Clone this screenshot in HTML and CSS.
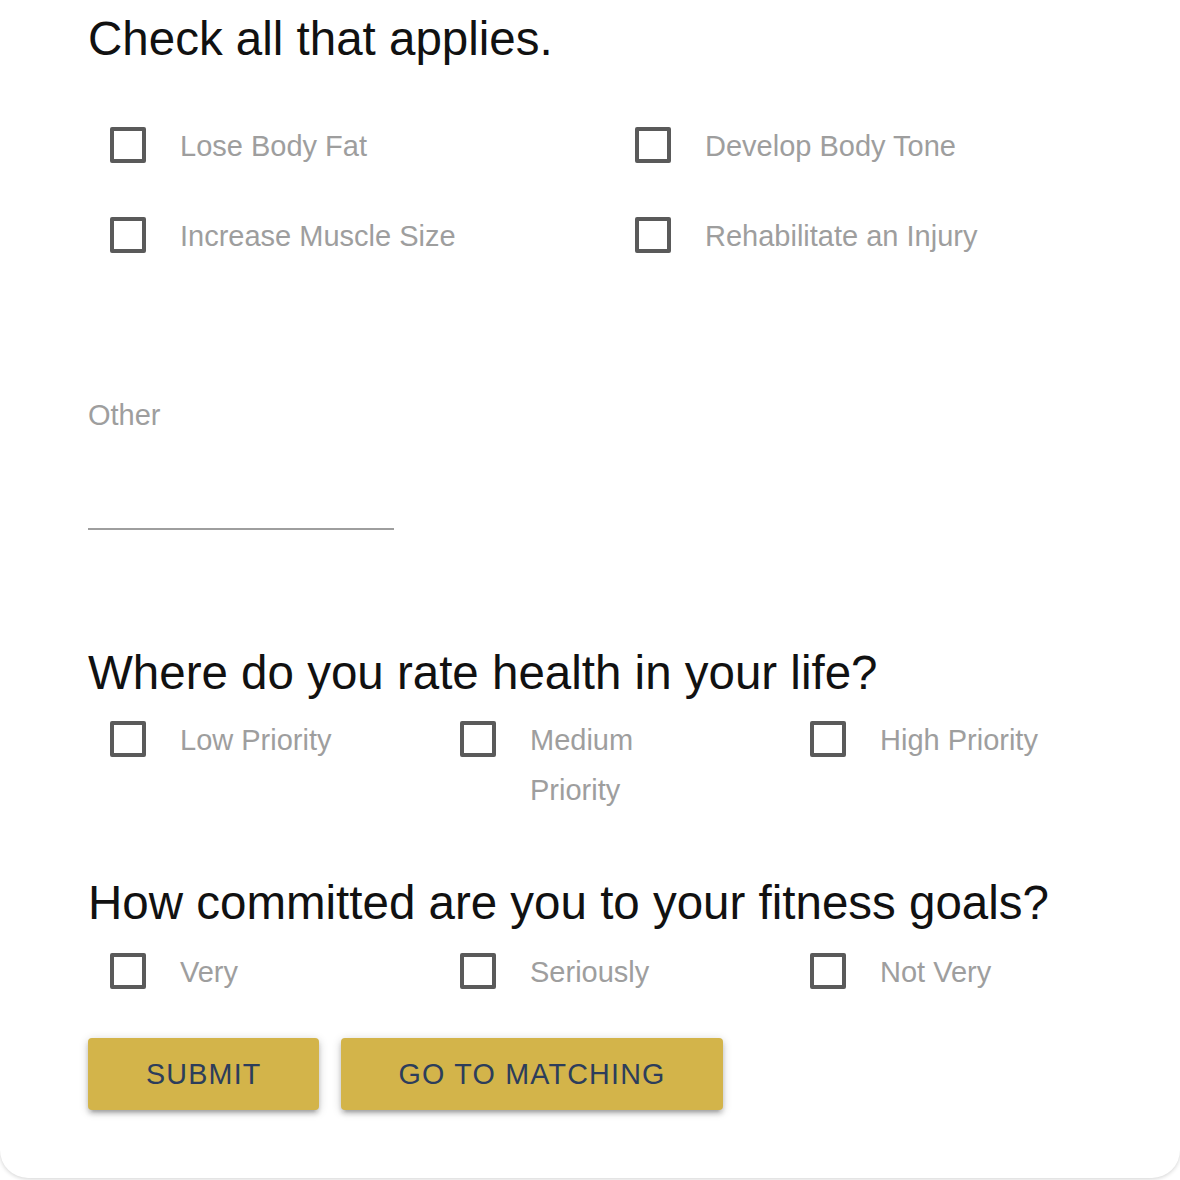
FILE: index.html
```html
<!DOCTYPE html>
<html lang="en">
<head>
<meta charset="utf-8">
<title>Fitness goals</title>
<link rel="stylesheet" href="styles.css">
</head>
<body>
<form class="card">
  <h2 class="question q-first">Check all that applies.</h2>
  <div class="grid two">
    <label class="option"><input type="checkbox"><span class="text">Lose Body Fat</span></label>
    <label class="option"><input type="checkbox"><span class="text">Develop Body Tone</span></label>
    <label class="option"><input type="checkbox"><span class="text">Increase Muscle Size</span></label>
    <label class="option"><input type="checkbox"><span class="text">Rehabilitate an Injury</span></label>
  </div>
  <div class="field">
    <label class="field-label" for="other">Other</label>
    <input class="field-input" id="other" type="text">
  </div>
  <h2 class="question q-second">Where do you rate health in your life?</h2>
  <div class="grid three">
    <label class="option"><input type="checkbox"><span class="text narrow">Low Priority</span></label>
    <label class="option"><input type="checkbox"><span class="text narrow">Medium Priority</span></label>
    <label class="option"><input type="checkbox"><span class="text narrow">High Priority</span></label>
  </div>
  <h2 class="question q-third">How committed are you to your fitness goals?</h2>
  <div class="grid three lower">
    <label class="option"><input type="checkbox"><span class="text narrow">Very</span></label>
    <label class="option"><input type="checkbox"><span class="text narrow">Seriously</span></label>
    <label class="option"><input type="checkbox"><span class="text narrow">Not Very</span></label>
  </div>
  <div class="actions">
    <button type="button" class="btn">SUBMIT</button>
    <button type="button" class="btn">GO TO MATCHING</button>
  </div>
</form>
</body>
</html>
```
FILE: styles.css
```css
html, body {
  margin: 0;
  padding: 0;
  background: #ffffff;
}

body {
  font-family: "Liberation Sans", Arial, Helvetica, sans-serif;
  width: 1180px;
  height: 1180px;
  overflow: hidden;
}

.card {
  box-sizing: border-box;
  width: 1180px;
  background: #ffffff;
  border-radius: 0 0 28px 28px;
  box-shadow: 0 1px 4px rgba(0, 0, 0, 0.18);
  padding: 10px 0 68px 88px;
  display: flex;
  flex-direction: column;
}

.question {
  margin: 0;
  font-size: 47.5px;
  line-height: 56px;
  font-weight: 400;
  color: #111111;
}

.q-first { margin-top: 1px; }
.q-second { margin-top: 115px; }
.q-third { margin-top: 60px; }

.grid {
  display: grid;
  width: 1050px;
  row-gap: 40px;
}

.grid.two {
  grid-template-columns: 525px 525px;
  margin-top: 54px;
}

.grid.three {
  grid-template-columns: 350px 350px 350px;
  margin-top: 14px;
}

.grid.three.lower {
  margin-top: 16px;
}

.option {
  display: flex;
  align-items: flex-start;
  padding-left: 22px;
  cursor: pointer;
}

.option input {
  appearance: none;
  -webkit-appearance: none;
  box-sizing: border-box;
  width: 36px;
  height: 36px;
  margin: 6px 0 0 0;
  border: 4px solid #5a5a5a;
  border-radius: 2px;
  background: transparent;
  flex: 0 0 36px;
}

.text {
  margin-left: 34px;
  font-size: 29px;
  line-height: 50px;
  color: #9e9e9e;
}

.text.narrow {
  max-width: 180px;
}

.field {
  display: flex;
  flex-direction: column;
  margin-top: 129px;
  width: 306px;
}

.field-label {
  font-size: 29px;
  line-height: 50px;
  color: #9e9e9e;
}

.field-input {
  box-sizing: border-box;
  height: 90px;
  width: 306px;
  border: none;
  border-bottom: 2px solid #9e9e9e;
  background: transparent;
  outline: none;
  padding: 0;
  font-family: inherit;
  font-size: 29px;
}

.actions {
  display: flex;
  gap: 22px;
  margin-top: 41px;
}

.btn {
  height: 72px;
  padding: 0 57px 0 58px;
  border: none;
  border-radius: 4px;
  background: #d3b44a;
  color: #2c3d5b;
  font-family: inherit;
  font-size: 28.7px;
  letter-spacing: 1.2px;
  line-height: 72px;
  box-shadow: 0 4px 4px 0 rgba(0, 0, 0, 0.14), 0 6px 2px -4px rgba(0, 0, 0, 0.12), 0 2px 10px 0 rgba(0, 0, 0, 0.2);
  cursor: pointer;
}
```
